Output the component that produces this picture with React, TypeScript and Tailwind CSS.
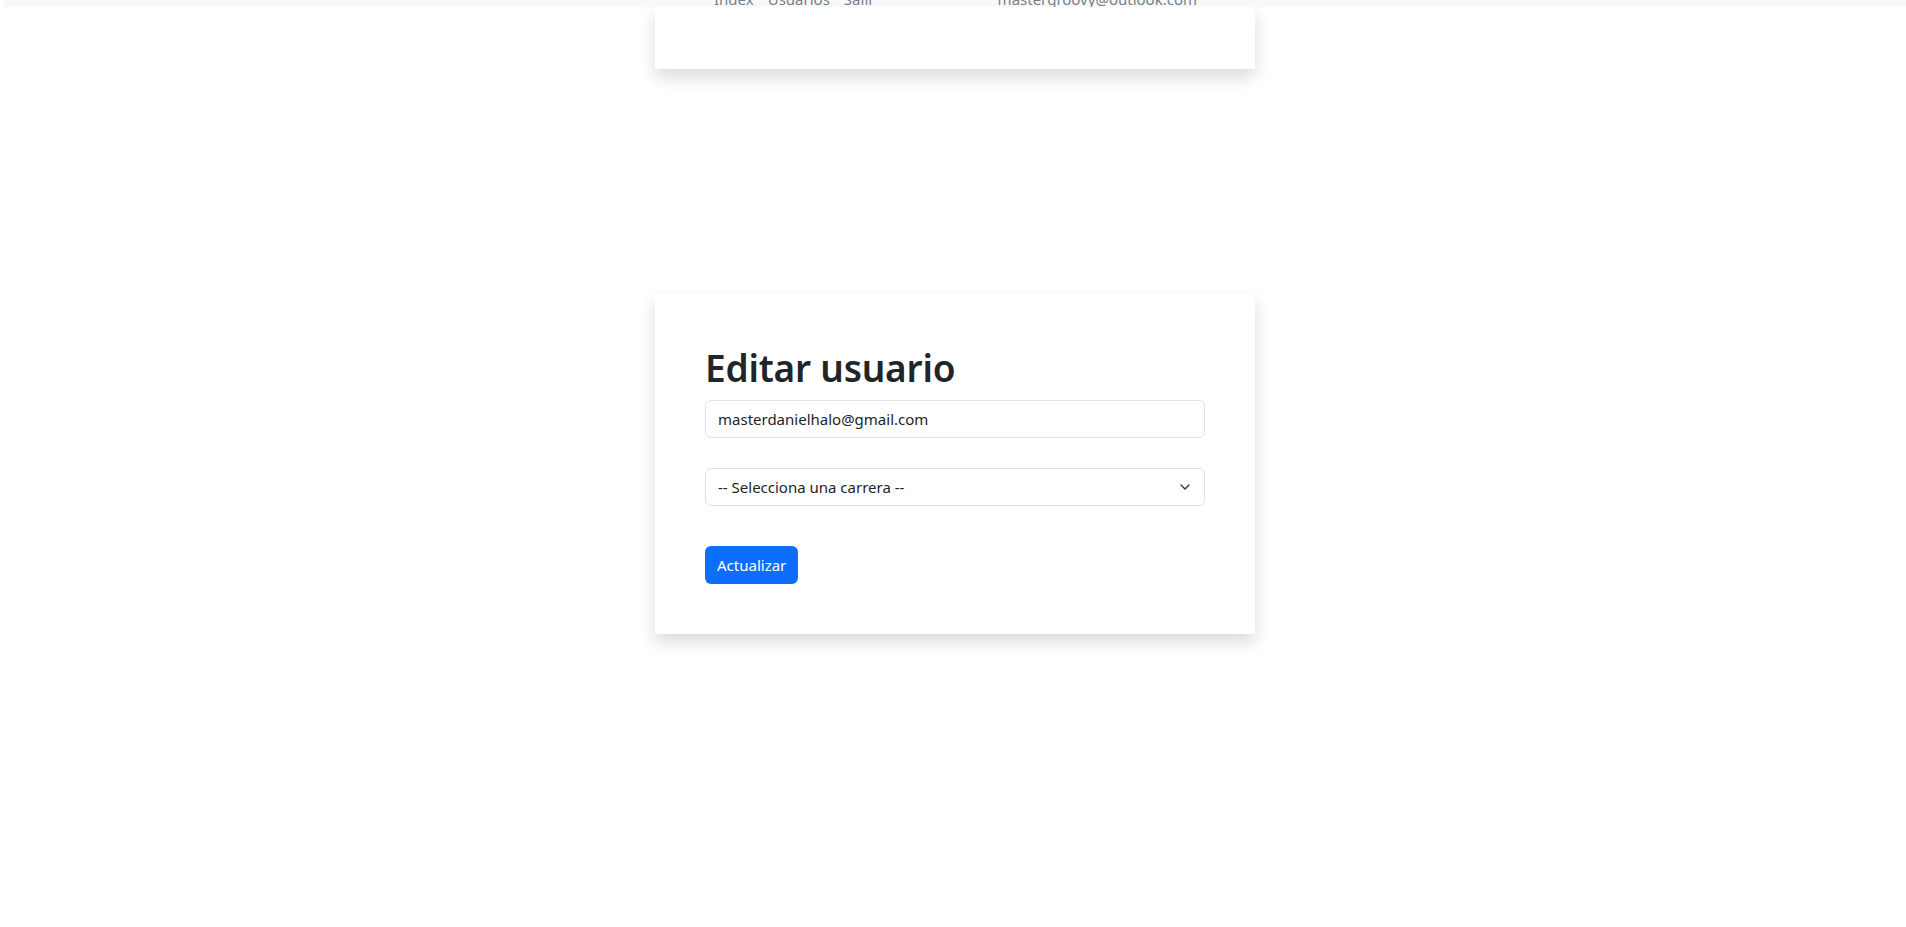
import React from 'react';

const font = { fontFamily: '"Noto Sans", "Open Sans", sans-serif' };

const TopBar: React.FC = () => (
  <div className="relative z-10 h-[7px] w-full overflow-hidden bg-[#f8f9fa]">
    <div className="mx-auto -mt-[13px] flex w-[600px] translate-x-[1px] text-[15px] leading-[24px] text-[#7a7e86]">
      <span className="ml-[58px]">Index</span>
      <span className="ml-[14px]">Usuarios</span>
      <span className="ml-[14px]">Salir</span>
      <span className="ml-auto mr-[59px]">mastergroovy@outlook.com</span>
    </div>
  </div>
);

const Chevron: React.FC = () => (
  <svg width="10" height="7" viewBox="0 0 10 7" className="pointer-events-none absolute right-[15px] top-1/2 -translate-y-1/2">
    <path d="M1 1.5 5 5.5 9 1.5" fill="none" stroke="#343a40" strokeWidth="1.4" strokeLinecap="round" strokeLinejoin="round" />
  </svg>
);

const App: React.FC = () => {
  return (
    <div className="min-h-screen bg-white pl-[4px] text-[#212529]" style={font}>
      <TopBar />
      <div className="mx-auto h-[62px] w-[600px] bg-white shadow-[0_8px_16px_rgba(0,0,0,0.15)]"></div>

      <div className="mx-auto mt-[225px] w-[600px] bg-white p-[50px] shadow-[0_8px_16px_rgba(0,0,0,0.15)]">
        <h1 className="mb-[8px] text-[37px] font-semibold leading-[48px] tracking-[-0.2px]">Editar usuario</h1>
        <input
          type="email"
          defaultValue="masterdanielhalo@gmail.com"
          className="block h-[38px] w-full rounded-[6px] border border-[#dee2e6] px-[12px] text-[15px] text-[#212529] outline-none"
          style={font}
        />
        <div className="relative mt-[30px]">
          <select
            defaultValue=""
            className="block h-[38px] w-full appearance-none rounded-[6px] border border-[#dee2e6] bg-white pl-[12px] pr-[36px] text-[15px] text-[#212529] outline-none"
            style={font}
          >
            <option value="">-- Selecciona una carrera --</option>
          </select>
          <Chevron />
        </div>
        <button
          type="submit"
          className="mt-[40px] h-[38px] rounded-[6px] bg-[#0d6efd] px-[12px] text-[15px] text-white"
          style={font}
        >
          Actualizar
        </button>
      </div>
    </div>
  );
};

export default App;
